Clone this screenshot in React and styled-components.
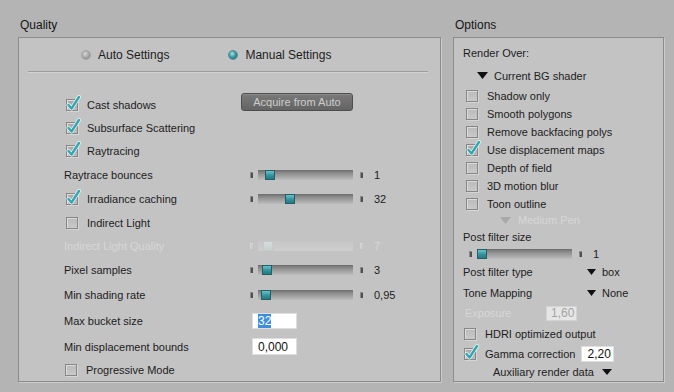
import React from "react";
import styled, { createGlobalStyle } from "styled-components";

const Global = createGlobalStyle`
  html, body { margin: 0; padding: 0; }
  body {
    background: #b4b4b4;
    font-family: "Liberation Sans", Arial, sans-serif;
    font-size: 11px;
    color: #1d1d1d;
  }
  #root { width: 674px; height: 392px; overflow: hidden; }
`;

const Page = styled.div`
  display: flex;
  gap: 12px;
  padding: 18px 0 0 18px;
  box-sizing: border-box;
  height: 392px;
`;

const Section = styled.section`
  display: flex;
  flex-direction: column;
  width: ${(p) => p.$w}px;
`;

const Title = styled.div`
  height: 19px;
  line-height: 14px;
  font-size: 12px;
  color: #161616;
  padding-left: 2px;
`;

const Panel = styled.div`
  box-sizing: border-box;
  height: 345px;
  background: #c3c3c3;
  border: 1px solid #8c8c8c;
  box-shadow: 1px 1px 0 #cbcbcb;
  display: flex;
  flex-direction: column;
`;

const RadioRow = styled.div`
  height: 34px;
  display: flex;
  align-items: center;
  gap: 59px;
  padding-left: 62px;
  font-size: 12px;
`;

const RadioItem = styled.label`
  display: flex;
  align-items: center;
  gap: 7px;
`;

const RadioDot = styled.span`
  box-sizing: border-box;
  width: 10px;
  height: 10px;
  border-radius: 50%;
  border: 1px solid ${(p) => (p.$on ? "#5d8a8f" : "#a3a3a3")};
  background: ${(p) =>
    p.$on
      ? "radial-gradient(circle at 40% 35%, #a8e6ec 0%, #3a9aa4 45%, #1f6970 100%)"
      : "radial-gradient(circle at 40% 35%, #d6d6d6 0%, #a3a3a3 55%, #858585 100%)"};
`;

const Divider = styled.div`
  height: 0;
  margin: 0 12px 0 9px;
  border-top: 1px solid #9c9c9c;
  border-bottom: 1px solid #d2d2d2;
`;

const Rows = styled.div`
  display: flex;
  flex-direction: column;
  padding-top: 20px;
`;

const QRow = styled.div`
  display: grid;
  grid-template-columns: 222px 1fr;
  align-items: center;
  height: ${(p) => p.$h}px;
`;

const Label = styled.span`
  padding-left: ${(p) => p.$pl ?? 45}px;
  color: ${(p) => (p.$off ? "#d7d7d7" : "#1d1d1d")};
  white-space: nowrap;
`;

const CheckWrap = styled.label`
  display: flex;
  align-items: center;
  gap: 9px;
  padding-left: ${(p) => p.$pl ?? 47}px;
  white-space: nowrap;
`;

const Box = styled.span`
  position: relative;
  box-sizing: border-box;
  width: 12px;
  height: 12px;
  flex: none;
  border: 1px solid #878787;
  background: ${(p) =>
    p.$on
      ? "linear-gradient(#a6a6a6, #bdbdbd)"
      : "linear-gradient(#bababa, #c9c9c9)"};
  box-shadow: inset 1px 1px 0 #dcdcdc, 1px 1px 0 #d6d6d6;
`;

const CheckSvg = styled.svg`
  position: absolute;
  left: 0px;
  top: -4px;
  overflow: visible;
`;

const Check = ({ on, children, pl }) => (
  <CheckWrap $pl={pl}>
    <Box $on={on}>
      {on && (
        <CheckSvg width="14" height="15" viewBox="0 0 14 15">
          <path d="M1.5 9 L4.5 12.5 L12 1" fill="none" stroke="#e9f7f8" strokeWidth="4" strokeLinecap="round" strokeLinejoin="round" />
          <path d="M1.5 9 L4.5 12.5 L12 1" fill="none" stroke="#37a5ae" strokeWidth="2.4" strokeLinecap="round" strokeLinejoin="round" />
        </CheckSvg>
      )}
    </Box>
    <span>{children}</span>
  </CheckWrap>
);

const Button = styled.button`
  box-sizing: border-box;
  width: 112px;
  height: 18px;
  margin-bottom: 5px;
  padding: 0;
  font-family: "Liberation Sans", Arial, sans-serif;
  font-size: 11px;
  color: #cdcdcd;
  background: linear-gradient(#7a7a7a, #646464);
  border: 1px solid #4e4e4e;
  border-radius: 3px;
  box-shadow: inset 0 1px 0 #8a8a8a;
`;

const SliderWrap = styled.div`
  display: flex;
  align-items: center;
  margin-left: ${(p) => p.$ml}px;
`;

const Tick = styled.span`
  width: 3px;
  height: 6px;
  background: ${(p) => (p.$off ? "#cbcbcb" : "#505050")};
  box-shadow: inset 1px 1px 0 ${(p) => (p.$off ? "#d6d6d6" : "#8a8a8a")};
`;

const Track = styled.span`
  position: relative;
  width: 95px;
  height: 10px;
  margin: 0 7px 0 5px;
  background: ${(p) =>
    p.$off
      ? "linear-gradient(#c6c6c6, #cecece)"
      : "linear-gradient(to bottom, #6c6c6c 0%, #8c8c8c 30%, #a8a8a8 70%, #bdbdbd 100%)"};
`;

const Thumb = styled.span`
  position: absolute;
  top: 0;
  box-sizing: border-box;
  width: 10px;
  height: 10px;
  border: 1px solid ${(p) => (p.$off ? "#c4caca" : "#225f66")};
  background: ${(p) =>
    p.$off
      ? "linear-gradient(#d5dcdc, #c9d0d0)"
      : "linear-gradient(#6cc0c8, #2f8f9a 60%, #267982)"};
`;

const Value = styled.span`
  margin-left: 11px;
  color: ${(p) => (p.$off ? "#d7d7d7" : "#1d1d1d")};
`;

const Slider = ({ pos, value, off, ml = 9 }) => (
  <SliderWrap $ml={ml}>
    <Tick $off={off} />
    <Track $off={off}>
      <Thumb $off={off} style={{ left: pos }} />
    </Track>
    <Tick $off={off} />
    <Value $off={off}>{value}</Value>
  </SliderWrap>
);

const Field = styled.div`
  box-sizing: border-box;
  width: ${(p) => p.$w}px;
  height: ${(p) => p.$hh}px;
  margin-left: ${(p) => p.$ml || 0}px;
  padding-left: ${(p) => p.$pl || 5}px;
  display: flex;
  align-items: center;
  background: ${(p) => (p.$off ? "#e6e6e6" : "#ffffff")};
  color: ${(p) => (p.$off ? "#a4a4a4" : "#111")};
  border: 1px solid ${(p) => (p.$off ? "#d4d4d4" : "#dedede")};
  font-size: 12px;
`;

const Sel = styled.span`
  background: #3d8fdc;
  color: #fff;
`;

const ORows = styled.div`
  display: flex;
  flex-direction: column;
  padding-top: 4px;
`;

const ORow = styled.div`
  display: flex;
  align-items: center;
  height: ${(p) => p.$h}px;
  padding-left: ${(p) => p.$pl ?? 9}px;
  gap: ${(p) => p.$gap ?? 0}px;
  color: ${(p) => (p.$off ? "#d7d7d7" : "#1d1d1d")};
  white-space: nowrap;
`;

const LabelCol = styled.span`
  width: ${(p) => p.$w}px;
  flex: none;
  padding-left: ${(p) => p.$pl || 0}px;
  box-sizing: border-box;
  color: ${(p) => (p.$off ? "#d7d7d7" : "#1d1d1d")};
`;

const Drop = styled.span`
  display: flex;
  align-items: center;
  gap: ${(p) => p.$gap}px;
`;

const Tri = ({ w = 11, h = 7, color = "#111" }) => (
  <svg width={w} height={h} viewBox={`0 0 ${w} ${h}`}>
    <polygon points={`0,0 ${w},0 ${w / 2},${h}`} fill={color} />
  </svg>
);

export default function App() {
  return (
    <>
      <Global />
      <Page>
        <Section $w={423}>
          <Title>Quality</Title>
          <Panel>
            <RadioRow>
              <RadioItem>
                <RadioDot />
                <span>Auto Settings</span>
              </RadioItem>
              <RadioItem>
                <RadioDot $on />
                <span>Manual Settings</span>
              </RadioItem>
            </RadioRow>
            <Divider />
            <Rows>
              <QRow $h={23}>
                <Check on>Cast shadows</Check>
                <div>
                  <Button>Acquire from Auto</Button>
                </div>
              </QRow>
              <QRow $h={23}>
                <Check on>Subsurface Scattering</Check>
              </QRow>
              <QRow $h={24}>
                <Check on>Raytracing</Check>
              </QRow>
              <QRow $h={24}>
                <Label>Raytrace bounces</Label>
                <Slider pos={7} value="1" />
              </QRow>
              <QRow $h={24}>
                <Check on>Irradiance caching</Check>
                <Slider pos={27} value="32" />
              </QRow>
              <QRow $h={23}>
                <Check>Indirect Light</Check>
              </QRow>
              <QRow $h={24}>
                <Label $off>Indirect Light Quality</Label>
                <Slider pos={5} value="7" off />
              </QRow>
              <QRow $h={24}>
                <Label>Pixel samples</Label>
                <Slider pos={4} value="3" />
              </QRow>
              <QRow $h={26}>
                <Label>Min shading rate</Label>
                <Slider pos={3} value="0,95" />
              </QRow>
              <QRow $h={26}>
                <Label>Max bucket size</Label>
                <div>
                  <Field $w={45} $hh={16} $ml={11}>
                    <Sel>32</Sel>
                  </Field>
                </div>
              </QRow>
              <QRow $h={25}>
                <Label>Min displacement bounds</Label>
                <div>
                  <Field $w={45} $hh={17} $ml={11}>0,000</Field>
                </div>
              </QRow>
              <QRow $h={22}>
                <Check pl={46}>Progressive Mode</Check>
              </QRow>
            </Rows>
          </Panel>
        </Section>

        <Section $w={211}>
          <Title>Options</Title>
          <Panel>
            <ORows>
              <ORow $h={22}>Render Over:</ORow>
              <ORow $h={23} $pl={23} $gap={6}>
                <Tri w={11} h={7} />
                <span>Current BG shader</span>
              </ORow>
              <ORow $h={18} $pl={0}>
                <Check pl={12}>Shadow only</Check>
              </ORow>
              <ORow $h={18} $pl={0}>
                <Check pl={12}>Smooth polygons</Check>
              </ORow>
              <ORow $h={18} $pl={0}>
                <Check pl={12}>Remove backfacing polys</Check>
              </ORow>
              <ORow $h={18} $pl={0}>
                <Check pl={12} on>Use displacement maps</Check>
              </ORow>
              <ORow $h={18} $pl={0}>
                <Check pl={12}>Depth of field</Check>
              </ORow>
              <ORow $h={18} $pl={0}>
                <Check pl={12}>3D motion blur</Check>
              </ORow>
              <ORow $h={17} $pl={0}>
                <Check pl={12}>Toon outline</Check>
              </ORow>
              <ORow $h={16} $pl={46} $gap={7} $off>
                <Tri w={11} h={7} color="#a9a9a9" />
                <span>Medium Pen</span>
              </ORow>
              <ORow $h={18}>Post filter size</ORow>
              <ORow $h={15} $pl={15}>
                <Slider pos={0} value="1" ml={0} />
              </ORow>
              <ORow $h={22}>
                <LabelCol $w={124}>Post filter type</LabelCol>
                <Drop $gap={6}>
                  <Tri w={9} h={6} />
                  <span>box</span>
                </Drop>
              </ORow>
              <ORow $h={20}>
                <LabelCol $w={124}>Tone Mapping</LabelCol>
                <Drop $gap={6}>
                  <Tri w={9} h={6} />
                  <span>None</span>
                </Drop>
              </ORow>
              <ORow $h={20}>
                <LabelCol $w={83} $pl={2} $off>Exposure</LabelCol>
                <Field $w={31} $hh={15} $pl={4} $off>1,60</Field>
              </ORow>
              <ORow $h={21} $pl={0}>
                <Check pl={10}>HDRI optimized output</Check>
              </ORow>
              <ORow $h={20} $pl={0} $gap={6}>
                <Check pl={10} on>Gamma correction</Check>
                <Field $w={33} $hh={16} $pl={5}>2,20</Field>
              </ORow>
              <ORow $h={16} $pl={39} $gap={8}>
                <span>Auxiliary render data</span>
                <Tri w={10} h={6} />
              </ORow>
            </ORows>
          </Panel>
        </Section>
      </Page>
    </>
  );
}
